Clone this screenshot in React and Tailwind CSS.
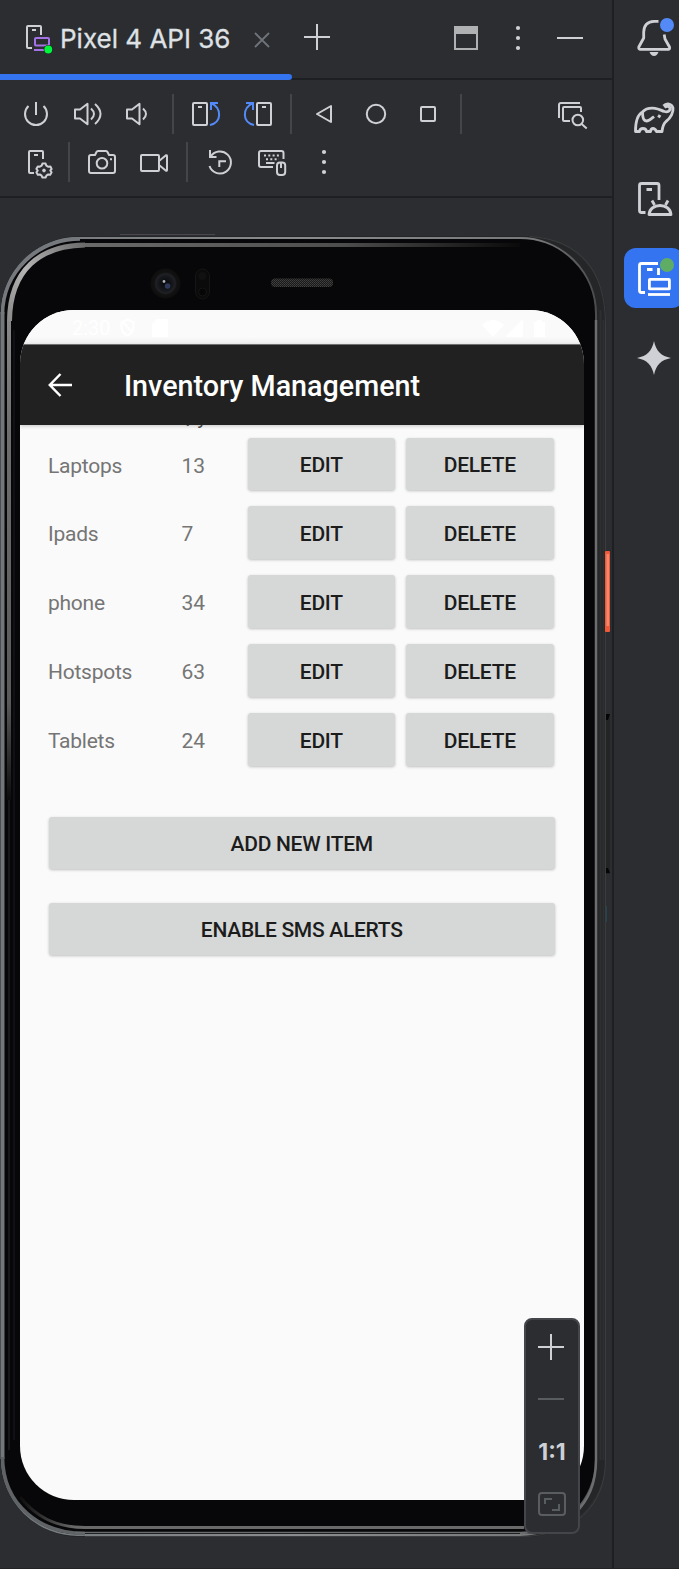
import React from "react";

const items = [
  { name: "Laptops", qty: 13 },
  { name: "Ipads", qty: 7 },
  { name: "phone", qty: 34 },
  { name: "Hotspots", qty: 63 },
  { name: "Tablets", qty: 24 },
];

function Tool({ label, children, className = "" }) {
  return (
    <button aria-label={label} className={`h-12 w-[52px] shrink-0 text-[#ced0d6] ${className}`}>
      <svg viewBox="0 0 52 48" className="block h-12 w-[52px]" fill="none" stroke="currentColor" strokeWidth="2" strokeLinejoin="round">
        {children}
      </svg>
    </button>
  );
}

function Separator() {
  return (
    <div className="flex h-12 w-[14px] shrink-0 items-center justify-center">
      <div className="h-10 w-0.5 bg-[#43454a]" />
    </div>
  );
}

function Stripe({ label, children, active }) {
  return (
    <button
      aria-label={label}
      className={`h-[60px] w-[60px] shrink-0 rounded-xl ${active ? "bg-[#3574f0] text-white" : "text-[#ced0d6]"}`}
    >
      <svg viewBox="0 0 60 60" className="block h-[60px] w-[60px]" fill="none" stroke="currentColor" strokeWidth="2.8" strokeLinejoin="round">
        {children}
      </svg>
    </button>
  );
}

function RotatePhone() {
  return (
    <>
      <rect x="13" y="13" width="14" height="22" rx="1" />
      <path d="M18 17H22" />
      <path d="M38 13H31V20M31 13C42 18 42 33 30 35" stroke="#548af7" strokeLinejoin="miter" />
    </>
  );
}

function TabBar() {
  return (
    <header className="flex h-20 border-b-2 border-[#1e1f22]">
      <div className="-mb-0.5 flex w-[292px] flex-col">
        <div className="flex h-[74px] items-center pl-[23px]">
          <svg viewBox="0 0 32 32" className="mt-0.5 h-8 w-8" fill="none" strokeWidth="2" strokeLinejoin="round">
            <path d="M9 26H5Q4 26 4 25V5Q4 4 5 4H17Q18 4 18 5V13M9 8H13" stroke="#ced0d6" />
            <rect x="12" y="16" width="14" height="7.5" rx="1" stroke="#a571e6" />
            <path d="M11 28H22" stroke="#a571e6" />
            <circle cx="25.3" cy="27.5" r="4.6" fill="#1f2a22" />
            <circle cx="25.3" cy="27.5" r="3.9" fill="#00f53d" />
          </svg>
          <span className="ml-[5px] mt-1 w-[190px] whitespace-nowrap font-['Inter',sans-serif] text-[26px] leading-8 text-[#dfe1e5] [-webkit-text-stroke:0.3px_#dfe1e5]">
            Pixel 4 API 36
          </span>
          <svg viewBox="0 0 24 24" className="mt-1.5 h-6 w-6" stroke="#6f737a" strokeWidth="1.8">
            <path d="M5 5L19 19M19 5L5 19" />
          </svg>
        </div>
        <div className="h-1.5 rounded-r-full bg-[#3574f0]" />
      </div>
      <svg viewBox="0 0 50 78" className="h-[78px] w-[50px]" stroke="#ced0d6" strokeWidth="2">
        <path d="M12 37H38M25 24V50" />
      </svg>
      <div className="ml-auto flex pr-4">
        <svg viewBox="0 0 52 78" className="h-[78px] w-[52px]" fill="none">
          <rect x="15" y="27" width="22" height="22" stroke="#b0b1b3" strokeWidth="2" />
          <path d="M14 26H38V34H14Z" fill="#b0b1b3" />
        </svg>
        <svg viewBox="0 0 52 78" className="h-[78px] w-[52px]" fill="#ced0d6">
          <circle cx="26" cy="28" r="2.1" />
          <circle cx="26" cy="38" r="2.1" />
          <circle cx="26" cy="48" r="2.1" />
        </svg>
        <svg viewBox="0 0 52 78" className="h-[78px] w-[52px]" stroke="#ced0d6" strokeWidth="2">
          <path d="M13 38H39" />
        </svg>
      </div>
    </header>
  );
}

function Toolbar() {
  return (
    <div className="h-[118px] border-b-2 border-[#1e1f22] pl-2.5 pr-3.5 pt-2.5">
      <div className="flex">
        <Tool label="Power">
          <path d="M18.5 16A11 11 0 1 0 33.5 16M26 12V25" />
        </Tool>
        <Tool label="Volume up">
          <path d="M13 19.5H18L25.5 13.8V34.2L18 28.5H13ZM29 18.5Q35 24 29 29.5M33 14Q44 24 33 34" />
        </Tool>
        <Tool label="Volume down">
          <path d="M13 19.5H18L25.5 13.8V34.2L18 28.5H13ZM29 18.5Q35 24 29 29.5" />
        </Tool>
        <Separator />
        <Tool label="Rotate left">
          <RotatePhone />
        </Tool>
        <Tool label="Rotate right">
          <g transform="matrix(-1 0 0 1 52 0)">
            <RotatePhone />
          </g>
        </Tool>
        <Separator />
        <Tool label="Back">
          <path d="M19 24L33 16V32Z" />
        </Tool>
        <Tool label="Home">
          <circle cx="26" cy="24" r="9.2" />
        </Tool>
        <Tool label="Overview">
          <rect x="19" y="17" width="14" height="14" rx="1" />
        </Tool>
        <Separator />
        <Tool label="UI check" className="ml-auto">
          <path d="M13 28V15Q13 13 15 13H34" />
          <path d="M24 31H18Q17 31 17 30V18Q17 17 18 17H34Q35 17 35 18V22" />
          <circle cx="31.8" cy="30" r="5.3" />
          <path d="M35.7 34L40.7 38.5" />
        </Tool>
      </div>
      <div className="flex">
        <Tool label="Device settings">
          <path d="M24 35H20Q19 35 19 34V14Q19 13 20 13H32Q33 13 33 14V21M24 17H28" />
          <path d="M32.4 25.5H35.6L36.3 27.6L38.4 28.8L40.4 28.4L41.6 31L40.3 32.5L41.6 34.3L40.2 36.8L38.2 36.4L36.4 37.6L35.6 39.6H32.4L31.6 37.6L29.8 36.4L27.8 36.8L26.4 34.3L27.7 32.6L26.4 30.8L27.8 28.4L29.8 28.7L31.7 27.6Z" strokeWidth="2" />
          <circle cx="34" cy="32.5" r="1.4" fill="currentColor" strokeWidth="1" />
        </Tool>
        <Separator />
        <Tool label="Screenshot">
          <path d="M15 17H19L20.5 14Q21 13 22 13H30Q31 13 31.5 14L33 17H37Q39 17 39 19V33Q39 35 37 35H15Q13 35 13 33V19Q13 17 15 17Z" />
          <circle cx="26" cy="25.3" r="5.3" />
          <path d="M34 21.3H36" />
        </Tool>
        <Tool label="Record">
          <rect x="13" y="17" width="18" height="16" rx="1" />
          <path d="M31 23L38 17.3Q39 17 39 18V32Q39 33 38 32.7L31 27" />
        </Tool>
        <Separator />
        <Tool label="Snapshots">
          <path d="M15.5 28A11 11 0 1 0 16.5 18.8M16 12V19H22.5M25.3 29V23.3H32" strokeLinejoin="miter" />
        </Tool>
        <Tool label="Hardware input">
          <path d="M27 29H15Q13 29 13 27V15Q13 13 15 13H35.5Q37.5 13 37.5 15V21" />
          <path d="M18 17.5H33" strokeDasharray="2 2.3" />
          <path d="M20 21.3H33" strokeDasharray="2 2.3" />
          <path d="M20 25H28.5" />
          <rect x="31" y="24.5" width="8.2" height="12.5" rx="3" />
          <path d="M35 25V30" />
        </Tool>
        <Tool label="More">
          <g fill="currentColor" stroke="none">
            <circle cx="26" cy="14" r="2.1" />
            <circle cx="26" cy="24" r="2.1" />
            <circle cx="26" cy="34" r="2.1" />
          </g>
        </Tool>
      </div>
    </div>
  );
}

/* Hardware shell; the viewBox origin is the top-left corner of the device pane. */
function DeviceShell() {
  return (
    <svg viewBox="0 198 612 1370" className="absolute left-0 top-0 h-[1370px] w-[612px]" fill="none">
      <defs>
        <linearGradient id="rim" x1="0" x2="1" y1="0" y2="0">
          <stop offset="0" stopColor="#74787c" />
          <stop offset="0.5" stopColor="#8a8b8d" />
          <stop offset="0.9" stopColor="#77787a" />
          <stop offset="1" stopColor="#4b4c4d" />
        </linearGradient>
        <linearGradient id="bevelTop" gradientUnits="userSpaceOnUse" x1="80" x2="520" y1="0" y2="0">
          <stop offset="0" stopColor="#6b6b6b" />
          <stop offset="0.6" stopColor="#4d4d4d" />
          <stop offset="1" stopColor="#0a0a0a" />
        </linearGradient>
        <linearGradient id="bevelCorner" gradientUnits="userSpaceOnUse" x1="8" x2="85" y1="320" y2="245">
          <stop offset="0" stopColor="#8a8a8a" />
          <stop offset="0.45" stopColor="#b4b4b4" />
          <stop offset="1" stopColor="#6b6b6b" />
        </linearGradient>
        <linearGradient id="bevelSide" gradientUnits="userSpaceOnUse" x1="0" x2="0" y1="310" y2="800">
          <stop offset="0" stopColor="#8a8a8a" />
          <stop offset="0.25" stopColor="#6e6e6e" />
          <stop offset="0.8" stopColor="#5a5a5a" />
          <stop offset="1" stopColor="#0c0c0d" />
        </linearGradient>
        <linearGradient id="bevelBottom" gradientUnits="userSpaceOnUse" x1="18" x2="75" y1="0" y2="0">
          <stop offset="0" stopColor="#0a0a0a" />
          <stop offset="1" stopColor="#69696a" />
        </linearGradient>
        <radialGradient id="lens">
          <stop offset="0" stopColor="#07070a" />
          <stop offset="0.5" stopColor="#17181d" />
          <stop offset="0.65" stopColor="#202125" />
          <stop offset="0.75" stopColor="#121212" />
          <stop offset="1" stopColor="#0e0e0e" />
        </radialGradient>
        <pattern id="mesh" width="2" height="2" patternUnits="userSpaceOnUse">
          <rect width="2" height="2" fill="#1a1a1a" />
          <rect width="1" height="1" fill="#414141" />
          <rect x="1" y="1" width="1" height="1" fill="#383838" />
        </pattern>
      </defs>
      <rect x="0" y="236" width="606" height="1301" rx="80" fill="#242628" />
      <path d="M530 236.5C580 240 605.5 270 605.5 325V1460C605.5 1505 575 1536.5 520 1536.5H85" stroke="#3b3c3e" />
      <path d="M120 234.5H215" stroke="#4a474c" />
      <rect x="2" y="238" width="594" height="1297" rx="76" fill="#070709" stroke="url(#rim)" strokeWidth="2" />
      <path d="M2.5 312V1459" stroke="#74777a" strokeWidth="4" />
      <path d="M2.5 1457C3 1505 40 1533.5 85 1533.5" stroke="#606366" strokeWidth="3.5" />
      <path d="M2.5 314C3 272 37 239.5 80 239" stroke="#75797e" strokeWidth="3.5" />
      <path d="M596 320V1460C596 1505 565 1533 520 1533" stroke="#6c6d6e" strokeWidth="2.5" />
      <path d="M600.5 310V1460M603.5 320V1460" stroke="#2d2f30" strokeWidth="2" />
      <path d="M75 1532.5H520" stroke="#6a6b6c" strokeWidth="1.5" />
      <path d="M9 320V800" stroke="url(#bevelSide)" strokeWidth="4" />
      <path d="M9.5 321C10 270 40 245.5 85 245" stroke="url(#bevelCorner)" strokeWidth="5" />
      <path d="M84 245H520" stroke="url(#bevelTop)" strokeWidth="4" />
      <path d="M9 800V1450" stroke="#18181a" strokeWidth="2" />
      <path d="M20 1497C36 1517 56 1527.5 85 1527.5H524" stroke="url(#bevelBottom)" strokeWidth="3" />
      <path d="M14 330V1440" stroke="#101115" strokeWidth="2" />
      <circle cx="165.5" cy="283.5" r="15" fill="url(#lens)" />
      <circle cx="164" cy="281.5" r="1.4" fill="#aeb1b8" />
      <circle cx="167.5" cy="286" r="2.8" fill="#3c4c78" opacity="0.7" />
      <rect x="195.5" y="269" width="14" height="30" rx="7" fill="#0b0b0b" stroke="#151515" />
      <circle cx="202.5" cy="276" r="4" fill="#111111" />
      <circle cx="202.5" cy="292" r="4" fill="#060606" stroke="#151515" />
      <rect x="271" y="278.5" width="62" height="8.5" rx="4" fill="url(#mesh)" />
      <rect x="605" y="551" width="5" height="81" rx="1" fill="#f0583a" />
      <rect x="606.5" y="554" width="2.5" height="72" fill="#ef8a6e" />
      <rect x="606" y="714" width="4" height="160" fill="#232424" />
      <path d="M606 714H610L608 720H606ZM606 868H608L610 873H606Z" fill="#050505" />
      <path d="M606.5 906V922" stroke="#22454f" />
    </svg>
  );
}

function AppButton({ children, className = "" }) {
  return (
    <button
      className={`flex h-[52.5px] items-center justify-center rounded-[3px] bg-[#d6d8d7] pt-[3px] text-[21px] font-medium tracking-[-0.28px] text-[#1c1c1c] shadow-[0_1px_3px_rgba(0,0,0,0.24)] ${className}`}
    >
      {children}
    </button>
  );
}

function Screen() {
  return (
    <div className="relative ml-5 mt-[112px] flex h-[1190px] w-[564px] flex-col overflow-hidden rounded-[54px] bg-[#fafafa] font-['Roboto',sans-serif]">
      <div className="flex h-[35px] items-start border-b border-[#777] bg-linear-to-b from-[#fafafa] from-80% to-[#eeeeee] pl-[52px] pr-[38px] pt-1.5 text-white">
        <span className="text-[20px] leading-6">2:30</span>
        <svg viewBox="0 0 18 22" className="ml-2 mt-0.5 h-[19px] w-[17px]" fill="none" stroke="white" strokeWidth="2.5">
          <path d="M9 2L16 5V11Q15 18 9 20Q3 18 2 11V5ZM4 5L14 16" />
        </svg>
        <svg viewBox="0 0 16 18" className="ml-4 mt-[3px] h-[18px] w-4" fill="white">
          <path d="M5 0H14Q16 0 16 2V16Q16 18 14 18H2Q0 18 0 16V5Z" />
        </svg>
        <svg viewBox="0 0 64 18" className="ml-auto mt-[3px] h-[18px] w-16" fill="white">
          <path d="M0 6Q11-4 22 6L11 18ZM23 18L41 0V18ZM52 3H55V1H60V3H63V18H52Z" />
        </svg>
      </div>
      <div className="z-10 flex h-20 shrink-0 items-center bg-[#212121] pl-7 text-white shadow-[0_1px_4px_rgba(0,0,0,0.22)]">
        <svg viewBox="0 0 24 24" className="h-6 w-6" fill="none" stroke="white" strokeWidth="2.5">
          <path d="M24 12H3M12.5 1L1.8 12L12.5 23" />
        </svg>
        <h1 className="ml-[52px] mt-0.5 whitespace-nowrap text-[28.7px] font-medium leading-8">Inventory Management</h1>
      </div>
      <div className="flex h-[12.5px] items-start overflow-hidden pl-[156px] text-[21px] text-[#555]">
        <span className="-mt-5 leading-[25px]">Qty</span>
      </div>
      <div className="flex flex-col gap-4 pl-7">
        {items.map((item) => (
          <div key={item.name} className="flex h-[52.9px] items-start text-[21px] leading-[52px] text-[#757575]">
            <span className="w-[133px] pt-[2px] tracking-[-0.25px]">{item.name}</span>
            <span className="w-[66.5px] pl-[0.5px] pt-[2px]">{item.qty}</span>
            <AppButton className="w-[147.5px]">EDIT</AppButton>
            <AppButton className="ml-[11px] w-[147.5px]">DELETE</AppButton>
          </div>
        ))}
      </div>
      <div className="mt-[51px] flex flex-col gap-[33.5px] pl-[28.5px]">
        <AppButton className="w-[506.5px]">ADD NEW ITEM</AppButton>
        <AppButton className="w-[506.5px]">ENABLE SMS ALERTS</AppButton>
      </div>
    </div>
  );
}

function ZoomPanel() {
  return (
    <div className="absolute left-[524px] top-[1120px] flex h-[216px] w-14 flex-col items-center rounded-lg border-2 border-[#43454a] bg-[#2b2d30]">
      <svg viewBox="0 0 52 52" className="mt-px h-[52px] w-[52px]" stroke="#ced0d6" strokeWidth="2">
        <path d="M12 26H38M25 13V39" />
      </svg>
      <svg viewBox="0 0 52 52" className="h-[52px] w-[52px]" stroke="#5a5d60" strokeWidth="2">
        <path d="M12 26H38" />
      </svg>
      <div className="flex h-[52px] items-center pt-[3px] font-['Inter',sans-serif] text-[23px] font-bold text-[#ced0d6]">1:1</div>
      <svg viewBox="0 0 52 52" className="h-[52px] w-[52px]" fill="none" stroke="#5a5d60" strokeWidth="2">
        <rect x="13" y="16" width="26" height="22" rx="3" />
        <path d="M19 27V22H26M26 33H33V27" />
      </svg>
    </div>
  );
}

function SideStripe() {
  return (
    <aside className="flex w-[65px] flex-col gap-5 overflow-hidden pl-2.5 pt-2">
      <Stripe label="Notifications">
        <path d="M34.5 13.4H30Q20 14 19.7 24V30L14.8 39Q14.5 41.3 16 41.3H44.5Q46 41 45.5 39L41 31L40.2 26.5" />
        <path d="M25.5 44H34.5Q33 48 30 48Q27 48 25.5 44Z" fill="currentColor" stroke="none" />
        <circle cx="43" cy="17" r="7" fill="#548af7" stroke="none" />
      </Stripe>
      <Stripe label="Gradle">
        <path
          d="M40.5 19.5C42 18 45 17.5 46 20C46.5 23 43.5 24.5 40.5 23.5C37 22.5 35 20.8 31 20.3C26 19.8 21 21 18.5 24C13 27 11.5 35 11.5 43.5H15.5Q16 40.5 19 40.5T22.5 43.5H26.5Q27 40.5 29 40.5T32.5 43.5H38C38.5 39 39 36 42 33.5C47 30 49.5 24 49 20C48 15.5 42.5 14.5 39.5 18"
          strokeWidth="2.8"
        />
        <path d="M18.5 24C18.5 28 19.5 33 22.5 33C25 33 27 31 30 28.5" strokeWidth="2.8" />
        <path d="M34 27.5L36.5 29" strokeWidth="3" />
      </Stripe>
      <Stripe label="Device manager">
        <path d="M21.5 44.5H17.5Q15.5 44.5 15.5 42.5V17.5Q15.5 15.5 17.5 15.5H33Q35 15.5 35 17.5V32M22.5 21.5H28" />
        <path d="M25 46.5C26 34.5 46 34.5 47 46.5ZM28 32.5L30.5 37M44 32.5L41.5 37" />
      </Stripe>
      <Stripe label="Running devices" active>
        <path d="M21 44.5H17.5Q15.5 44.5 15.5 42.5V17.5Q15.5 15.5 17.5 15.5H34M23 21.5H28.5M34.5 20V27" />
        <rect x="25.4" y="31.4" width="20" height="9.5" rx="0.5" />
        <path d="M24 46.5H46" />
        <circle cx="43" cy="17" r="8" fill="#3574f0" stroke="none" />
        <circle cx="43" cy="17" r="7" fill="#5fad65" stroke="none" />
      </Stripe>
      <Stripe label="Gemini">
        <path d="M30 13C32 23 37 28 47 30C37 32 32 37 30 47C28 37 23 32 13 30C23 28 28 23 30 13Z" fill="currentColor" stroke="none" />
      </Stripe>
    </aside>
  );
}

export default function App() {
  return (
    <div className="flex h-[1569px] w-[679px] overflow-hidden border-b border-[#242226] bg-[#2b2d30]">
      <main className="w-[614px] shrink-0 border-r-2 border-[#1e1f22]">
        <TabBar />
        <Toolbar />
        <div className="relative flex h-[1370px]">
          <DeviceShell />
          <Screen />
          <ZoomPanel />
        </div>
      </main>
      <SideStripe />
    </div>
  );
}
